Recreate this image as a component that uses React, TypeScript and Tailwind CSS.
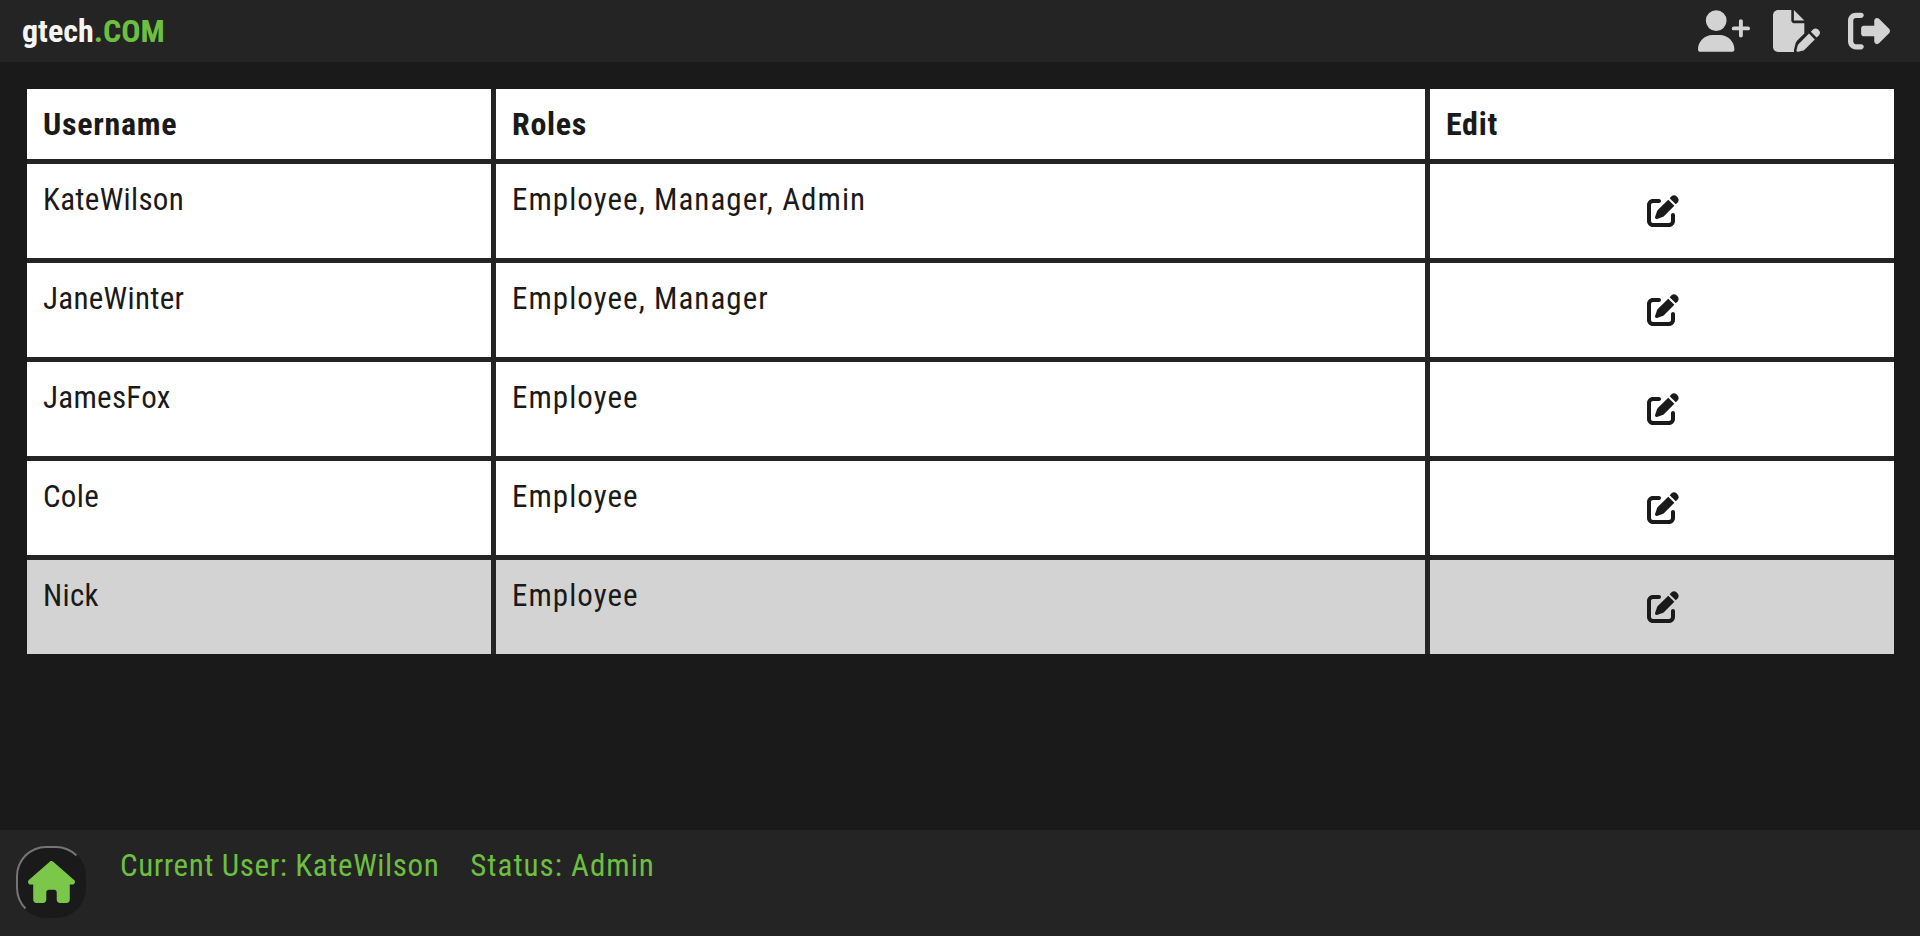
import React from "react";
import { FaUserPlus, FaFilePen, FaRightFromBracket, FaPenToSquare, FaHouse } from "react-icons/fa6";

const users = [
  { name: "KateWilson", roles: "Employee, Manager, Admin" },
  { name: "JaneWinter", roles: "Employee, Manager" },
  { name: "JamesFox", roles: "Employee" },
  { name: "Cole", roles: "Employee" },
  { name: "Nick", roles: "Employee", inactive: true },
];

export default function App() {
  return (
    <div className="flex h-[936px] flex-col bg-[#1a1a1a] font-['Roboto_Condensed','Roboto',sans-serif] text-[#1a1a1a]">
      <header className="flex h-[62px] items-center justify-between bg-[#242424] pl-[22px] pr-[30px]">
        <h1 className="text-[32px] font-bold text-[#f5f5f5]">
          gtech<span className="text-[#6cbf3f]">.COM</span>
        </h1>
        <nav className="flex items-center gap-[23px] text-[#d3d3d3]">
          <FaUserPlus className="h-[42px] w-[52px]" />
          <FaFilePen className="h-[42px] w-[47px]" />
          <FaRightFromBracket className="ml-[5px] h-[42px] w-[42px]" />
        </nav>
      </header>

      <main className="flex-1 pl-[27px] pr-[26px] pt-[27px]">
        <div className="grid grid-cols-[464px_1fr_464px] gap-[5px] bg-[#242424]">
          {["Username", "Roles", "Edit"].map((h) => (
            <div key={h} className="flex h-[70px] items-center bg-white px-[16px] text-[32px] font-bold tracking-[0.7px]">
              {h}
            </div>
          ))}
          {users.map((u) => {
            const bg = u.inactive ? "bg-[#d3d3d3]" : "bg-white";
            return (
              <React.Fragment key={u.name}>
                <div className={`h-[94px] pl-[16px] pt-[18px] text-[31px] leading-[36px] tracking-[0.3px] ${bg}`}>{u.name}</div>
                <div className={`h-[94px] pl-[16px] pt-[18px] text-[31px] leading-[36px] tracking-[1.05px] ${bg}`}>{u.roles}</div>
                <div className={`flex h-[94px] items-center justify-center pl-[2px] text-[32px] ${bg}`}>
                  <FaPenToSquare />
                </div>
              </React.Fragment>
            );
          })}
        </div>
      </main>

      <footer className="flex h-[106px] items-start bg-[#242424] pl-[16px] pt-[16px]">
        <button className="flex h-[72px] w-[70px] items-center justify-center rounded-[30px] border-2 border-b-[#1a1a1a] border-l-[#757575] border-r-[#1a1a1a] border-t-[#757575] bg-[#1a1a1a] text-[#7ac74a]">
          <FaHouse className="h-[42px] w-[47px]" />
        </button>
        <p className="ml-[34px] mt-[2px] whitespace-nowrap text-[31px] leading-[36px] tracking-[0.6px] text-[#6cbf3f]">Current User: KateWilson</p>
        <p className="ml-[31px] mt-[2px] whitespace-nowrap text-[31px] leading-[36px] tracking-[1px] text-[#6cbf3f]">Status: Admin</p>
      </footer>
    </div>
  );
}
